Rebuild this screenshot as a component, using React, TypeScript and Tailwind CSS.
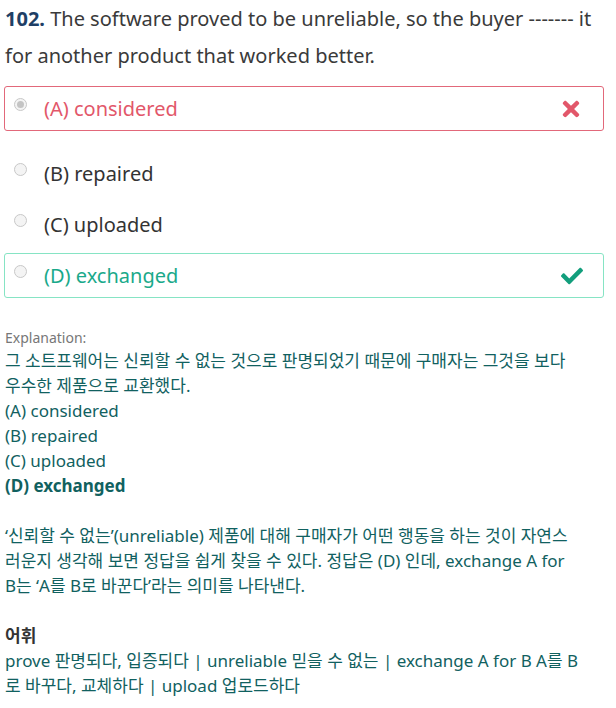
import { FaCheck, FaTimes } from 'react-icons/fa';

const options = [
  { label: '(A) considered', state: 'wrong', selected: true },
  { label: '(B) repaired', state: 'none', selected: false },
  { label: '(C) uploaded', state: 'none', selected: false },
  { label: '(D) exchanged', state: 'right', selected: false },
];

const Radio = ({ selected }: { selected: boolean }) => (
  <span className="w-[13px] h-[13px] rounded-full border border-[#c8c8c8] bg-[#f4f4f4] flex items-center justify-center shrink-0">
    {selected && <span className="w-[7px] h-[7px] rounded-full bg-[#c4c4c4]" />}
  </span>
);

const App = () => {
  return (
    <div className="w-[616px] h-[708px] bg-white overflow-hidden font-['Noto_Sans','Noto_Sans_CJK_KR',sans-serif]">
      {/* Question */}
      <p className="px-[5px] text-[20px] leading-[37px] text-[#3a3a3a] whitespace-nowrap">
        <span className="font-bold text-[#1f3f66]">102.</span> The software proved to be unreliable, so the buyer ------- it
        <br />
        for another product that worked better.
      </p>

      {/* Options */}
      <div className="mt-[12px] ml-[4px] w-[600px] flex flex-col">
        {options.map((opt, i) => {
          const border =
            opt.state === 'wrong'
              ? 'border border-[#e2687a] rounded-[3px]'
              : opt.state === 'right'
              ? 'border border-[#86e4c4] rounded-[3px]'
              : 'border border-transparent';
          const color =
            opt.state === 'wrong' ? 'text-[#e2576a]' : opt.state === 'right' ? 'text-[#1aa98a]' : 'text-[#333]';
          return (
            <div
              key={i}
              className={`flex items-center h-[45px] pl-[9px] pr-[20px] ${border} ${i === 1 ? 'mt-[20px]' : ''} ${i === 2 ? 'mt-[6px]' : ''} ${i === 3 ? 'mt-[6px]' : ''}`}
            >
              <span className="-mt-[8px]">
                <Radio selected={opt.selected} />
              </span>
              <span className={`ml-[17px] text-[20px] ${color}`}>{opt.label}</span>
              <span className="ml-auto flex items-center">
                {opt.state === 'wrong' && <FaTimes size={24} className="text-[#e2576a]" />}
                {opt.state === 'right' && <FaCheck size={22} className="text-[#129e7c]" />}
              </span>
            </div>
          );
        })}
      </div>

      {/* Explanation */}
      <div className="px-[5px] mt-[30px] text-[17px] leading-[25px] text-[#11615f] whitespace-nowrap">
        <div className="text-[14px] leading-[20px] text-[#777]">Explanation:</div>
        <p>
          그 소트프웨어는 신뢰할 수 없는 것으로 판명되었기 때문에 구매자는 그것을 보다
          <br />
          우수한 제품으로 교환했다.
        </p>
        <p>(A) considered</p>
        <p>(B) repaired</p>
        <p>(C) uploaded</p>
        <p className="font-bold">(D) exchanged</p>
        <p className="mt-[25px]">
          ‘신뢰할 수 없는’(unreliable) 제품에 대해 구매자가 어떤 행동을 하는 것이 자연스
          <br />
          러운지 생각해 보면 정답을 쉽게 찾을 수 있다. 정답은 (D) 인데, exchange A for
          <br />
          B는 ‘A를 B로 바꾼다’라는 의미를 나타낸다.
        </p>
        <p className="mt-[25px] font-bold text-[#333]">어휘</p>
        <p>
          prove 판명되다, 입증되다 | unreliable 믿을 수 없는 | exchange A for B A를 B
          <br />
          로 바꾸다, 교체하다 | upload 업로드하다
        </p>
      </div>
    </div>
  );
};

export default App;
